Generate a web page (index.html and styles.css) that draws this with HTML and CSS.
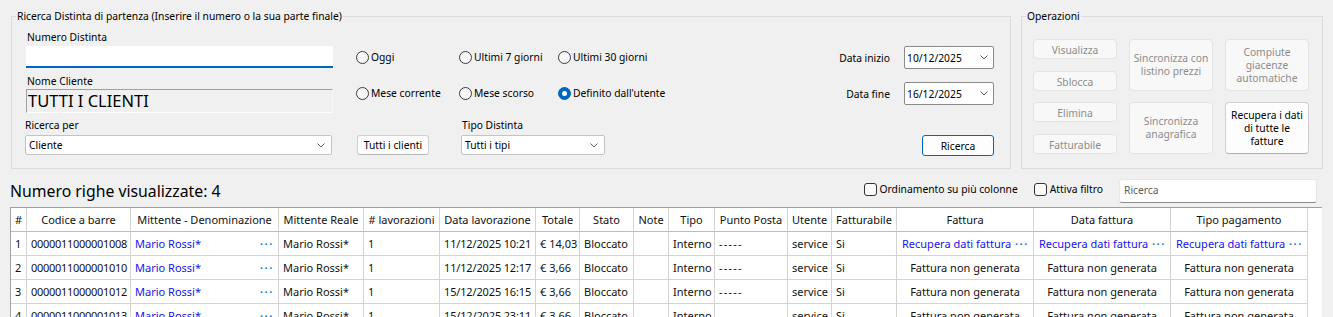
FILE: index.html
```html
<!DOCTYPE html>
<html lang="it">
<head>
<meta charset="utf-8">
<title>Ricerca Distinta</title>
<link rel="stylesheet" href="styles.css">
</head>
<body>
<div class="top">
  <fieldset class="grp grp-search">
    <legend>Ricerca Distinta di partenza (Inserire il numero o la sua parte finale)</legend>
    <div class="search-body">
      <div class="col-a">
        <div class="lbl lbl-num">Numero Distinta</div>
        <div class="txt-input"></div>
        <div class="lbl lbl-nome">Nome Cliente</div>
        <div class="ro-box">TUTTI I CLIENTI</div>
        <div class="lbl lbl-ric">Ricerca per</div>
        <div class="combo combo-wide"><span>Cliente</span><svg class="chev" width="8" height="5" viewBox="0 0 8 5"><path d="M0.5 0.5 L4 4 L7.5 0.5" fill="none" stroke="#606060" stroke-width="1"/></svg></div>
      </div>
      <div class="col-b">
        <div class="radios">
          <div class="radio"><span class="dot"></span><span class="rlbl">Oggi</span></div>
          <div class="radio"><span class="dot"></span><span class="rlbl">Ultimi 7 giorni</span></div>
          <div class="radio"><span class="dot"></span><span class="rlbl">Ultimi 30 giorni</span></div>
          <div class="radio"><span class="dot"></span><span class="rlbl">Mese corrente</span></div>
          <div class="radio"><span class="dot"></span><span class="rlbl">Mese scorso</span></div>
          <div class="radio"><span class="dot on"></span><span class="rlbl">Definito dall'utente</span></div>
        </div>
        <div class="bottom-row">
          <button class="btn btn-tutti">Tutti i clienti</button>
          <div class="tipo">
            <div class="lbl">Tipo Distinta</div>
            <div class="combo combo-tipo"><span>Tutti i tipi</span><svg class="chev" width="8" height="5" viewBox="0 0 8 5"><path d="M0.5 0.5 L4 4 L7.5 0.5" fill="none" stroke="#606060" stroke-width="1"/></svg></div>
          </div>
        </div>
      </div>
      <div class="col-c">
        <div class="date-row"><span class="lbl">Data inizio</span><div class="datebox"><span>10/12/2025</span><svg class="chev" width="8" height="5" viewBox="0 0 8 5"><path d="M0.5 0.5 L4 4 L7.5 0.5" fill="none" stroke="#606060" stroke-width="1"/></svg></div></div>
        <div class="date-row"><span class="lbl">Data fine</span><div class="datebox"><span>16/12/2025</span><svg class="chev" width="8" height="5" viewBox="0 0 8 5"><path d="M0.5 0.5 L4 4 L7.5 0.5" fill="none" stroke="#606060" stroke-width="1"/></svg></div></div>
        <button class="btn btn-ricerca">Ricerca</button>
      </div>
    </div>
  </fieldset>
  <fieldset class="grp grp-ops">
    <legend>Operazioni</legend>
    <div class="ops-body">
      <div class="stack">
        <button class="op op-s">Visualizza</button>
        <button class="op op-s">Sblocca</button>
      </div>
      <button class="op op-l">Sincronizza con<br>listino prezzi</button>
      <button class="op op-l">Compiute<br>giacenze<br>automatiche</button>
      <div class="stack">
        <button class="op op-s">Elimina</button>
        <button class="op op-s">Fatturabile</button>
      </div>
      <button class="op op-l">Sincronizza<br>anagrafica</button>
      <button class="op op-l op-on">Recupera i dati<br>di tutte le<br>fatture</button>
    </div>
  </fieldset>
</div>

<div class="info">
  <div class="count">Numero righe visualizzate: 4</div>
  <div class="chk chk-first"><span class="box"></span><span class="cl">Ordinamento su più colonne</span></div>
  <div class="chk"><span class="box"></span><span class="cl">Attiva filtro</span></div>
  <input class="search" type="text" placeholder="Ricerca">
</div>

<div class="grid-wrap">
  <table class="grid">
    <thead>
      <tr>
        <th class="w-num">#</th>
        <th class="w-cod">Codice a barre</th>
        <th class="w-mit">Mittente - Denominazione</th>
        <th class="w-mre">Mittente Reale</th>
        <th class="w-lav"># lavorazioni</th>
        <th class="w-dat">Data lavorazione</th>
        <th class="w-tot">Totale</th>
        <th class="w-sta">Stato</th>
        <th class="w-not">Note</th>
        <th class="w-tip">Tipo</th>
        <th class="w-pun">Punto Posta</th>
        <th class="w-ute">Utente</th>
        <th class="w-fat">Fatturabile</th>
        <th class="w-fa2">Fattura</th>
        <th class="w-fa2">Data fattura</th>
        <th class="w-fa2">Tipo pagamento</th>
      </tr>
    </thead>
    <tbody>
      <tr>
        <td>1</td><td class="num">0000011000001008</td>
        <td class="lcell"><div class="lc"><span class="lnk">Mario Rossi*</span><span class="dots">···</span></div></td>
        <td>Mario Rossi*</td><td>1</td><td class="dt">11/12/2025 10:21</td><td>€ 14,03</td><td>Bloccato</td><td></td><td>Interno</td><td class="dash">-----</td><td>service</td><td>Si</td>
        <td class="fcell"><div class="lc"><span class="lnk">Recupera dati fattura</span><span class="dots">···</span></div></td>
        <td class="fcell"><div class="lc"><span class="lnk">Recupera dati fattura</span><span class="dots">···</span></div></td>
        <td class="fcell"><div class="lc"><span class="lnk">Recupera dati fattura</span><span class="dots">···</span></div></td>
      </tr>
      <tr>
        <td>2</td><td class="num">0000011000001010</td>
        <td class="lcell"><div class="lc"><span class="lnk">Mario Rossi*</span><span class="dots">···</span></div></td>
        <td>Mario Rossi*</td><td>1</td><td class="dt">11/12/2025 12:17</td><td>€ 3,66</td><td>Bloccato</td><td></td><td>Interno</td><td class="dash">-----</td><td>service</td><td>Si</td>
        <td class="c">Fattura non generata</td><td class="c">Fattura non generata</td><td class="c">Fattura non generata</td>
      </tr>
      <tr>
        <td>3</td><td class="num">0000011000001012</td>
        <td class="lcell"><div class="lc"><span class="lnk">Mario Rossi*</span><span class="dots">···</span></div></td>
        <td>Mario Rossi*</td><td>1</td><td class="dt">15/12/2025 16:15</td><td>€ 3,66</td><td>Bloccato</td><td></td><td>Interno</td><td class="dash">-----</td><td>service</td><td>Si</td>
        <td class="c">Fattura non generata</td><td class="c">Fattura non generata</td><td class="c">Fattura non generata</td>
      </tr>
      <tr>
        <td>4</td><td class="num">0000011000001013</td>
        <td class="lcell"><div class="lc"><span class="lnk">Mario Rossi*</span><span class="dots">···</span></div></td>
        <td>Mario Rossi*</td><td>1</td><td class="dt">15/12/2025 23:11</td><td>€ 3,66</td><td>Bloccato</td><td></td><td>Interno</td><td class="dash">-----</td><td>service</td><td>Si</td>
        <td class="c">Fattura non generata</td><td class="c">Fattura non generata</td><td class="c">Fattura non generata</td>
      </tr>
    </tbody>
  </table>
</div>
</body>
</html>
```

FILE: styles.css
```css
body {
  margin: 0;
  width: 1333px;
  height: 317px;
  overflow: hidden;
  background: #f0f0f0;
  font-family: "Noto Sans", "Open Sans", sans-serif;
  font-size: 10.3px;
  color: #000;
}

.top {
  display: flex;
  gap: 10px;
  padding: 10px 0 0 11px;
}

fieldset.grp {
  margin: 0;
  padding: 0;
  border: 1px solid #dcdcdc;
  min-width: 0;
  box-sizing: border-box;
}
.grp-search { width: 1000px; }
.grp-ops { width: 302px; }

legend {
  margin-left: 4px;
  padding: 0 1px;
  font-size: 10.3px;
  line-height: 13px;
}

.search-body {
  display: flex;
  height: 145px;
  padding: 0 16px 0 14px;
}

.col-a {
  width: 307px;
  display: flex;
  flex-direction: column;
}
.lbl {
  line-height: 12px;
  white-space: nowrap;
}
.lbl-num { margin-top: 8px; padding-left: 1px; }
.txt-input {
  margin-top: 3px;
  height: 22px;
  box-sizing: border-box;
  background: #fff;
  border-bottom: 2px solid #0067c0;
}
.lbl-nome { margin-top: 7px; padding-left: 1px; }
.ro-box {
  margin-top: 2px;
  height: 24px;
  box-sizing: border-box;
  border: 1px solid;
  border-color: #a0a0a0 #f8f8f8 #fdfdfd #a0a0a0;
  font-size: 16.5px;
  line-height: 22px;
  padding-left: 1px;
}
.lbl-ric { margin-top: 6px; margin-left: -1px; }

.combo {
  display: flex;
  align-items: center;
  justify-content: space-between;
  height: 20px;
  box-sizing: border-box;
  background: #fff;
  border: 1px solid #c4c4c4;
  border-radius: 2px;
  padding: 0 6px 0 3px;
}
.combo-wide { margin-top: 4px; margin-left: -1px; width: 307px; }
.chev { display: block; flex: none; }

.col-b {
  margin-left: 23px;
  display: flex;
  flex-direction: column;
}
.radios {
  margin-top: 27px;
  display: grid;
  grid-template-columns: 103px 99px auto;
  row-gap: 22px;
}
.radio {
  display: flex;
  align-items: center;
  height: 14px;
}
.dot {
  width: 13px;
  height: 13px;
  box-sizing: border-box;
  border: 1px solid #3c3c3c;
  border-radius: 50%;
  background: #f7f7f7;
  flex: none;
}
.dot.on {
  background: #0067c0;
  border-color: #0067c0;
  display: flex;
  align-items: center;
  justify-content: center;
}
.dot.on::after {
  content: "";
  width: 5px;
  height: 5px;
  border-radius: 50%;
  background: #fff;
}
.rlbl { margin-left: 2px; white-space: nowrap; }

.bottom-row {
  margin-top: 19px;
  display: flex;
  align-items: flex-end;
}
.btn {
  font: inherit;
  color: #000;
  margin: 0;
  padding: 0;
  background: #fdfdfd;
  border: 1px solid #d0d0d0;
  border-bottom-color: #b8b8b8;
  border-radius: 3px;
  box-sizing: border-box;
  text-align: center;
}
.btn-tutti { width: 72px; height: 20px; margin-left: 1px; }
.tipo {
  margin-left: 32px;
  display: flex;
  flex-direction: column;
}
.tipo .lbl { padding-left: 1px; margin-bottom: 4px; }
.combo-tipo { width: 144px; }

.col-c {
  margin-left: auto;
  display: flex;
  flex-direction: column;
  align-items: flex-end;
}
.date-row {
  display: flex;
  align-items: center;
  gap: 14px;
}
.date-row:first-child { margin-top: 23px; }
.date-row + .date-row { margin-top: 13px; }
.datebox {
  width: 90px;
  height: 23px;
  box-sizing: border-box;
  border: 1px solid #8a8a8a;
  border-radius: 2px;
  background: #fff;
  display: flex;
  align-items: center;
  justify-content: space-between;
  padding: 0 5px 0 2px;
}
.btn-ricerca {
  margin-top: 30px;
  width: 72px;
  height: 21px;
  border-color: #0067c0;
}

.ops-body {
  height: 145px;
  box-sizing: border-box;
  padding: 16px 0 0 11px;
  display: grid;
  grid-template-columns: repeat(3, 84px);
  grid-template-rows: 52px 52px;
  column-gap: 12px;
  row-gap: 11px;
}
.stack {
  display: flex;
  flex-direction: column;
  justify-content: space-between;
}
.op {
  font: inherit;
  margin: 0;
  padding: 0;
  box-sizing: border-box;
  border: 1px solid #e4e4e4;
  background: #f8f8f8;
  color: #8d8d8d;
  border-radius: 4px;
  text-align: center;
  line-height: 13px;
}
.op-s { height: 20px; padding-top: 2px; }
.op-l { height: 52px; }
.op-on {
  background: #fdfdfd;
  color: #000;
  border-color: #cfcfcf;
  border-bottom-color: #b0b0b0;
}

.info {
  display: flex;
  align-items: flex-start;
  padding: 10px 16px 0 10px;
}
.count {
  margin-top: 2px;
  font-size: 15.8px;
  line-height: 20px;
}
.chk {
  margin-top: 4px;
  display: flex;
  align-items: center;
  height: 13px;
}
.chk-first { margin-left: auto; }
.chk + .chk { margin-left: 16px; }
.box {
  width: 13px;
  height: 13px;
  box-sizing: border-box;
  border: 1px solid #333;
  border-radius: 3px;
  background: #fbfbfb;
  flex: none;
}
.cl { margin-left: 3px; white-space: nowrap; line-height: 13px; }
.search {
  margin: 0 0 0 16px;
  width: 198px;
  height: 24px;
  box-sizing: border-box;
  border: 1px solid #e8e8e8;
  border-bottom-color: #8a8a8a;
  border-radius: 3px;
  background: #fff;
  font: inherit;
  padding: 0 0 3px 4px;
  outline: none;
}
.search::placeholder { color: #5c5c5c; }

.grid-wrap {
  margin: 4px 0 0 10px;
  width: 1312px;
  height: 200px;
  box-sizing: border-box;
  background: #fff;
  border-top: 1px solid #a0a0a0;
  border-left: 1px solid #a0a0a0;
}
.grid {
  table-layout: fixed;
  width: 1297px;
  border-collapse: separate;
  border-spacing: 0;
  font-size: 11px;
  color: #111;
}
.grid th,
.grid td {
  box-sizing: border-box;
  height: 24px;
  padding: 0 4px;
  border-right: 1px solid #d4d4d4;
  border-bottom: 1px solid #d4d4d4;
  white-space: nowrap;
  overflow: hidden;
  text-align: left;
  font-weight: normal;
  vertical-align: middle;
}
.grid th { text-align: center; border-bottom-color: #bdbdbd; }
.grid td.c { text-align: center; }
.num { letter-spacing: -0.3px; }
.dt { letter-spacing: -0.15px; }
.grid td.dash { letter-spacing: 1.2px; }

.w-num { width: 16px; }
.w-cod { width: 104px; }
.w-mit { width: 148px; }
.w-mre { width: 85px; }
.w-lav { width: 76px; }
.w-dat { width: 96px; }
.w-tot { width: 44px; }
.w-sta { width: 54px; }
.w-not { width: 35px; }
.w-tip { width: 46px; }
.w-pun { width: 73px; }
.w-ute { width: 44px; }
.w-fat { width: 65px; }
.w-fa2 { width: 137px; }

.lc {
  display: flex;
  justify-content: space-between;
  align-items: center;
}
.lcell { padding-right: 3px; }
.grid td.fcell { padding: 0 4px 0 5px; }
.lnk { color: #1414f0; }
.dots {
  color: #1f6fd1;
  font-weight: 700;
  letter-spacing: 1.6px;
}
```
